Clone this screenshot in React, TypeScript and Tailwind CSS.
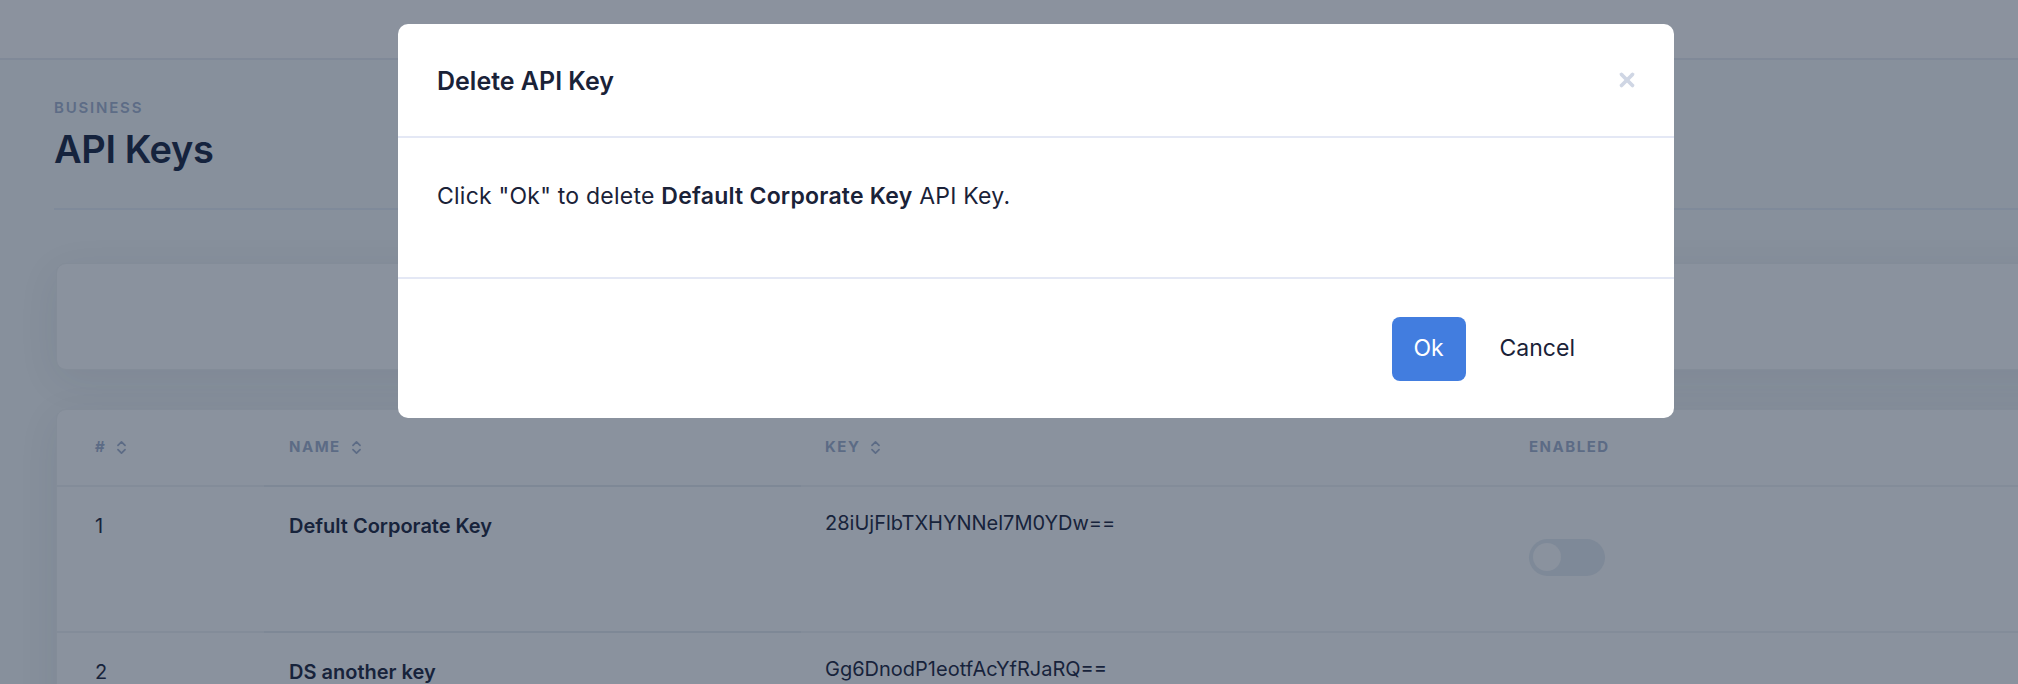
import { ChevronsUpDown, X } from "lucide-react";

const rows = [
  { id: 1, name: "Defult Corporate Key", key: "28iUjFlbTXHYNNel7M0YDw==" },
  { id: 2, name: "DS another key", key: "Gg6DnodP1eotfAcYfRJaRQ==" },
];

const SortIcon = () => <ChevronsUpDown size={17} strokeWidth={2.4} className="ml-[7px] text-[#5c6b85]" />;

const Toggle = () => (
  <div className="flex h-[37px] w-[76px] items-center rounded-full bg-[#7e8998] px-[4px]">
    <div className="h-[28px] w-[28px] rounded-full bg-[#8a929e]" />
  </div>
);

const App = () => {
  return (
    <div className="relative h-[684px] w-[2018px] overflow-hidden bg-[#87909c] font-['Inter',sans-serif]">
      <div className="h-[60px] border-b-2 border-[#808998] bg-[#8b929e]" />
      <div className="w-[2100px] pl-[54px]">
        <div className="pt-[38px] text-[15px] font-semibold leading-[20px] tracking-[0.12em] text-[#5d6c86]">BUSINESS</div>
        <h1 className="mt-[7px] text-[38px] leading-[48px] font-semibold tracking-[-0.01em] text-[#15233d]">API Keys</h1>
        <div className="mt-[35px] h-[2px] bg-[#7f8a9a]" />

        <div className="mt-[53px] ml-[2px] h-[107px] rounded-[10px] border border-[#838c98] bg-[#8a929e] shadow-[0_10px_40px_rgba(30,40,60,0.08)]" />

        <div className="mt-[39px] ml-[2px] rounded-[10px] border border-[#838c98] bg-[#8a929e] shadow-[0_10px_40px_rgba(30,40,60,0.08)]">
          <div className="grid h-[75px] grid-cols-[207px_537px_704px_1fr] items-center text-[15px] font-bold tracking-[0.1em] text-[#5c6b85]">
            <div className="flex items-center pl-[38px]">#<SortIcon /></div>
            <div className="flex items-center pl-[25px]">NAME<SortIcon /></div>
            <div className="flex items-center pl-[24px]">KEY<SortIcon /></div>
            <div className="pl-[24px]">ENABLED</div>
          </div>
          {rows.map((r) => (
            <div key={r.id} className="grid h-[146px] grid-cols-[207px_537px_704px_1fr] text-[20px] leading-[28px] text-[#17233b]">
              <div className="border-t-2 border-[#838c99] pt-[25px] pl-[38px]">{r.id}</div>
              <div className="border-t-2 border-[#7e8896] pt-[25px] pl-[25px] font-semibold">{r.name}</div>
              <div className="border-t-2 border-[#838c99] pt-[22px] pl-[24px]">{r.key}</div>
              <div className="flex items-center border-t-2 border-[#838c99] pb-[4px] pl-[24px]">
                <Toggle />
              </div>
            </div>
          ))}
        </div>
      </div>

      <div className="absolute top-[24px] left-[398px] w-[1276px] rounded-[10px] bg-white text-[#1a2238]">
        <div className="flex h-[114px] items-center justify-between border-b-2 border-[#e4e8f5] pl-[39px] pr-[36px]">
          <h2 className="pt-[4px] text-[25px] font-semibold">Delete API Key</h2>
          <X size={22} strokeWidth={4} className="text-[#cfd6e4]" />
        </div>
        <div className="px-[39px] pt-[42px] pb-[64px] text-[23px] leading-[33px] tracking-[0.01em]">
          Click "Ok" to delete <span className="font-semibold">Default Corporate Key</span> API Key.
        </div>
        <div className="flex h-[141px] items-center justify-end border-t-2 border-[#e4e8f5] pr-[75px]">
          <button className="h-[64px] w-[74px] rounded-[8px] bg-[#427ddf] text-[23px] text-white">Ok</button>
          <button className="ml-[10px] px-[24px] text-[23px] text-[#1a2238]">Cancel</button>
        </div>
      </div>
    </div>
  );
};

export default App;
